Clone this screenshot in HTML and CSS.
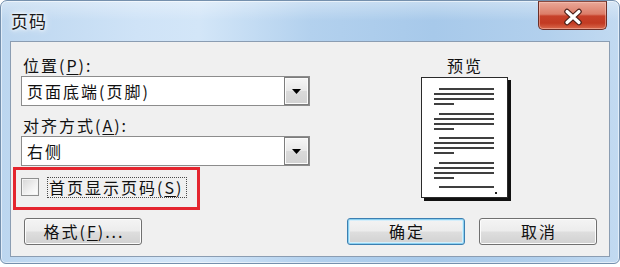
FILE: index.html
```html
<!DOCTYPE html>
<html lang="zh-CN">
<head>
<meta charset="utf-8">
<title>页码</title>
<link rel="stylesheet" href="styles.css">
</head>
<body>
<div class="window">
  <div class="titlebar">
    <span class="title">页码</span>
    <div class="close">
      <svg width="22" height="18" viewBox="0 0 22 18">
        <path d="M5 3.5L17 14.5M17 3.5L5 14.5" stroke="#4a1f18" stroke-width="5.5" stroke-linecap="round"/>
        <path d="M5 3.5L17 14.5M17 3.5L5 14.5" stroke="#fff" stroke-width="3.2" stroke-linecap="round"/>
      </svg>
    </div>
  </div>
  <div class="client">
    <div class="left">
      <div class="label">位置(<u>P</u>):</div>
      <div class="combo">
        <span class="combo-text">页面底端(页脚)</span>
        <span class="drop"><svg width="9" height="5" viewBox="0 0 9 5"><path d="M0 0H9L4.5 5Z" fill="#000"/></svg></span>
      </div>
      <div class="label label-2">对齐方式(<u>A</u>):</div>
      <div class="combo">
        <span class="combo-text">右侧</span>
        <span class="drop"><svg width="9" height="5" viewBox="0 0 9 5"><path d="M0 0H9L4.5 5Z" fill="#000"/></svg></span>
      </div>
      <div class="annot">
        <div class="check">
          <span class="box"></span>
          <span class="focus">首页显示页码(<u>S</u>)</span>
        </div>
      </div>
    </div>
    <div class="preview">
      <div class="label preview-label">预览</div>
      <div class="page">
        <div class="para gap8"><div class="ln ind"></div><div class="ln"></div><div class="ln"></div><div class="ln short"></div></div>
        <div class="para gap7"><div class="ln ind"></div><div class="ln"></div><div class="ln"></div><div class="ln short"></div></div>
        <div class="para gap8"><div class="ln ind"></div><div class="ln"></div><div class="ln"></div><div class="ln short"></div></div>
        <div class="para gap7"><div class="ln ind"></div><div class="ln"></div><div class="ln"></div><div class="ln short"></div></div>
        <div class="para"><div class="ln ind"></div></div>
        <div class="dot"></div>
      </div>
    </div>
    <div class="bottom-left">
      <div class="btn">格式(<u>F</u>)...</div>
    </div>
    <div class="bottom-right">
      <div class="btn default">确定</div>
      <div class="btn">取消</div>
    </div>
  </div>
</div>
</body>
</html>
```
FILE: styles.css
```css
* { box-sizing: border-box; }
body {
  margin: 0;
  width: 620px;
  height: 267px;
  overflow: hidden;
  background: #ffffff;
  font-family: "Noto Sans CJK SC", "Noto Sans", sans-serif;
  color: #111;
}
.window {
  width: 620px;
  height: 264px;
  border: 1px solid #7590ad;
  border-radius: 7px 7px 6px 6px;
  padding: 0 9px 6px 9px;
  display: flex;
  flex-direction: column;
  background:
    linear-gradient(180deg, rgba(255,255,255,0.35) 0px, rgba(255,255,255,0) 20px),
    linear-gradient(90deg, #bcd6ef 0%, #cfe3f7 22%, #d3e6f8 32%, #b3d1ee 50%, #a7c9ea 70%, #b2d0ed 88%, #c2daf1 100%);
  box-shadow: inset 0 0 0 1px rgba(255,255,255,0.55);
}
.titlebar {
  height: 40px;
  flex: none;
  display: flex;
  justify-content: space-between;
  align-items: flex-start;
}
.title {
  margin-top: 8px;
  padding-left: 1px;
  font-size: 17px;
  line-height: 24px;
  letter-spacing: 1px;
  color: #1b1b1b;
  text-shadow: 0 0 5px #fff, 0 0 3px #fff, 0 0 8px #fff;
}
.close {
  width: 69px;
  height: 29px;
  margin-right: 3px;
  border: 1px solid #6b2f28;
  border-top-color: #8a4a40;
  border-radius: 0 0 5px 5px;
  background: linear-gradient(180deg, #e9a898 0%, #dc7d68 45%, #c7412a 52%, #c23a22 78%, #d9694c 100%);
  box-shadow: inset 0 0 0 1px rgba(255,210,200,0.45);
  display: flex;
  align-items: center;
  justify-content: center;
  padding-top: 2px;
}
.client {
  flex: 1;
  border: 1px solid #8b9db2;
  background: #f0f0f0;
  display: grid;
  grid-template-columns: 297px 1fr;
  grid-template-rows: auto 27px;
  row-gap: 7px;
  padding: 13px 12px 11px 2px;
}
.left {
  display: flex;
  flex-direction: column;
}
.label {
  height: 20px;
  font-size: 16px;
  line-height: 20px;
  letter-spacing: 2px;
  padding-left: 10px;
  white-space: nowrap;
}
.label-2 { margin-top: 9px; }
.combo {
  margin-top: 1px;
  margin-left: 8px;
  width: 289px;
  height: 30px;
  border: 1px solid #8c8c8c;
  background: #fff;
  display: flex;
  align-items: center;
  justify-content: space-between;
  padding-left: 5px;
}
.combo-text {
  font-size: 16px;
  line-height: 20px;
  letter-spacing: 2px;
}
.drop {
  width: 25px;
  height: 28px;
  margin-right: 0;
  border: 1px solid #7d7d7d;
  background: linear-gradient(180deg, #f6f6f6 0%, #e8e8e8 50%, #dadada 51%, #d2d2d2 100%);
  box-shadow: inset 0 0 0 1px #fbfbfb;
  display: flex;
  align-items: center;
  justify-content: center;
}
.annot {
  margin-top: 1px;
  width: 187px;
  height: 43px;
  border: 3px solid #e4252e;
  padding: 7px 0 0 5px;
}
.check {
  display: flex;
  align-items: flex-start;
  gap: 8px;
}
.box {
  width: 18px;
  height: 18px;
  margin-top: 1px;
  border: 1px solid #8e8f8f;
  background: linear-gradient(135deg, #d6d6d6 0%, #f2f2f2 60%, #ffffff 100%);
  box-shadow: inset 0 0 0 1px #f4f4f4;
}
.focus {
  height: 21px;
  border: 1px dotted #4a4a4a;
  padding: 0 3px 0 1px;
  font-size: 16px;
  line-height: 19px;
  letter-spacing: 2px;
  white-space: nowrap;
}
.preview {
  padding-left: 21px;
  display: flex;
  flex-direction: column;
  align-items: center;
}
.preview-label {
  padding-left: 2px;
  font-size: 16px;
}
.page {
  margin-top: 2px;
  width: 87px;
  height: 121px;
  background: #fff;
  border: 1px solid #2a2a2a;
  box-shadow: 3px 3px 0 #111;
  padding: 10px 0 0 12px;
  display: flex;
  flex-direction: column;
}
.para {
  display: flex;
  flex-direction: column;
  gap: 3px;
}
.gap8 { margin-bottom: 8px; }
.gap7 { margin-bottom: 7px; }
.ln {
  height: 2px;
  width: 60px;
  background: #3f3f3f;
}
.ln.ind { margin-left: 5px; width: 55px; }
.ln.short { width: 20px; }
.dot {
  width: 2px;
  height: 2px;
  margin-top: 4px;
  margin-left: 61px;
  background: #1f1f1f;
}
.bottom-left {
  padding-left: 11px;
}
.bottom-right {
  display: flex;
  justify-content: flex-end;
  gap: 14px;
}
.btn {
  width: 118px;
  height: 27px;
  border: 1px solid #707070;
  border-radius: 3px;
  background: linear-gradient(180deg, #f4f4f4 0%, #ececec 48%, #dedede 52%, #d1d1d1 100%);
  box-shadow: inset 0 0 0 1px #fcfcfc;
  font-size: 16px;
  line-height: 25px;
  letter-spacing: 2px;
  text-align: center;
  padding-left: 2px;
  white-space: nowrap;
}
.btn.default {
  border-color: #3c7fb1;
  box-shadow: inset 0 0 0 1px #8ad0f0, inset 0 0 0 2px #d4eefb;
}
u { text-underline-offset: 2px; }
```
